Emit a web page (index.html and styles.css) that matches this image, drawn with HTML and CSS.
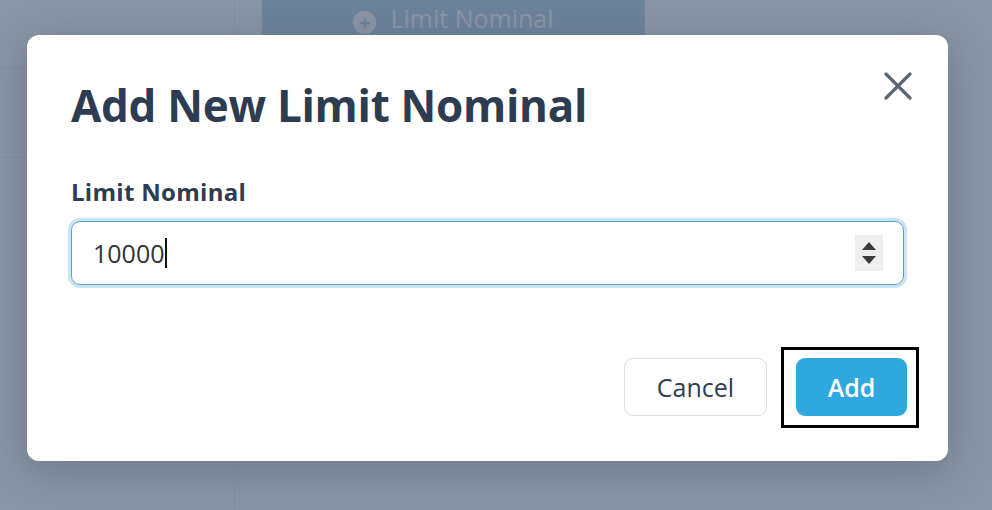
FILE: index.html
```html
<!DOCTYPE html>
<html lang="en">
<head>
    <meta charset="UTF-8">
    <meta name="viewport" content="width=device-width, initial-scale=1.0">
    <title>Add New Limit Nominal</title>
    <link rel="stylesheet" href="styles.css">
</head>
<body>
    <div class="page">
        <div class="page-side">
            <div class="side-row"></div>
            <div class="side-row"></div>
        </div>
        <div class="page-main">
            <button class="btn-bg">
                <span class="plus-icon">+</span>
                Limit Nominal
            </button>
        </div>
    </div>

    <div class="overlay">
        <div class="modal">
            <button class="close-btn" aria-label="Close">
                <svg width="28" height="28" viewBox="0 0 28 28">
                    <path d="M2 2 L26 26 M26 2 L2 26" stroke="#5b6678" stroke-width="3.2" stroke-linecap="round"/>
                </svg>
            </button>

            <h2 class="modal-title">Add New Limit Nominal</h2>

            <label class="field-label" for="limit">Limit Nominal</label>
            <div class="input-wrap" id="limit">
                <span class="input-value">10000</span>
                <span class="caret"></span>
                <div class="spinner">
                    <span class="tri-up"></span>
                    <span class="tri-down"></span>
                </div>
            </div>

            <div class="modal-footer">
                <button class="btn btn-cancel">Cancel</button>
                <div class="focus-box">
                    <button class="btn btn-add">Add</button>
                </div>
            </div>
        </div>
    </div>
</body>
</html>
```

FILE: styles.css
```css
* {
    margin: 0;
    padding: 0;
    box-sizing: border-box;
}

body {
    font-family: 'Open Sans', 'Noto Sans', sans-serif;
    background: #f4f6f9;
    width: 992px;
    height: 510px;
    overflow: hidden;
    position: relative;
}

/* background page */
.page {
    display: flex;
    height: 100%;
}

.page-side {
    width: 235px;
    border-right: 1px solid #e3e7ec;
    padding-top: 67px;
}

.side-row {
    height: 90px;
    border-top: 1px solid #dfe3e9;
}

.page-main {
    flex: 1;
    padding-left: 27px;
}

.btn-bg {
    width: 383px;
    height: 35px;
    background: #2a7ec4;
    border: none;
    color: #ffffff;
    font-family: inherit;
    font-size: 25px;
    display: flex;
    align-items: flex-end;
    justify-content: center;
    gap: 14px;
    opacity: 0.5;
}

.plus-icon {
    width: 23px;
    height: 23px;
    border-radius: 50%;
    background: #ffffff;
    color: #2a7ec4;
    font-size: 20px;
    line-height: 23px;
    font-weight: 700;
    margin-bottom: 1px;
}

.overlay {
    position: absolute;
    inset: 0;
    background: rgba(96, 109, 130, 0.72);
    padding: 35px 0 0 27px;
}

/* modal */
.modal {
    position: relative;
    width: 921px;
    height: 426px;
    background: #ffffff;
    border-radius: 12px;
    padding: 42px 44px 0 44px;
    box-shadow: 0 10px 40px rgba(60, 70, 90, 0.35);
}

.close-btn {
    position: absolute;
    top: 37px;
    right: 36px;
    background: none;
    border: none;
    width: 28px;
    height: 28px;
}

.modal-title {
    font-size: 44px;
    font-weight: 700;
    color: #2e3c52;
    line-height: 1.3;
    letter-spacing: -0.3px;
}

.field-label {
    display: block;
    margin-top: 44px;
    font-size: 24px;
    font-weight: 700;
    color: #2e3c52;
    line-height: 1.2;
    letter-spacing: 0.3px;
}

.input-wrap {
    margin-top: 14px;
    height: 64px;
    border: 1.5px solid #5fa2bd;
    border-radius: 9px;
    box-shadow: 0 0 0 3px #c9e4f6;
    display: flex;
    align-items: center;
    padding-left: 21px;
}

.input-value {
    font-size: 25px;
    color: #333333;
}

.caret {
    width: 1.5px;
    height: 30px;
    background: #111111;
    margin-left: 1px;
}

.spinner {
    margin-left: auto;
    margin-right: 20px;
    width: 28px;
    height: 36px;
    background: #efefef;
    display: flex;
    flex-direction: column;
    align-items: center;
    justify-content: center;
    gap: 6px;
}

.tri-up {
    width: 0;
    height: 0;
    border-left: 7px solid transparent;
    border-right: 7px solid transparent;
    border-bottom: 8px solid #3a3a3a;
}

.tri-down {
    width: 0;
    height: 0;
    border-left: 7px solid transparent;
    border-right: 7px solid transparent;
    border-top: 8px solid #3a3a3a;
}

.modal-footer {
    display: flex;
    justify-content: flex-end;
    align-items: center;
    gap: 14px;
    margin-top: 62px;
    margin-right: -15px;
}

.btn {
    height: 58px;
    border-radius: 9px;
    font-family: inherit;
    font-size: 25px;
    cursor: pointer;
}

.btn-cancel {
    width: 143px;
    background: #ffffff;
    border: 1px solid #d9dde2;
    color: #2e3c52;
    font-weight: 500;
}

.focus-box {
    border: 3px solid #000000;
    padding: 8px 9px 9px 12px;
}

.btn-add {
    width: 111px;
    background: #2fa8e0;
    border: none;
    color: #ffffff;
    font-weight: 600;
}
```
